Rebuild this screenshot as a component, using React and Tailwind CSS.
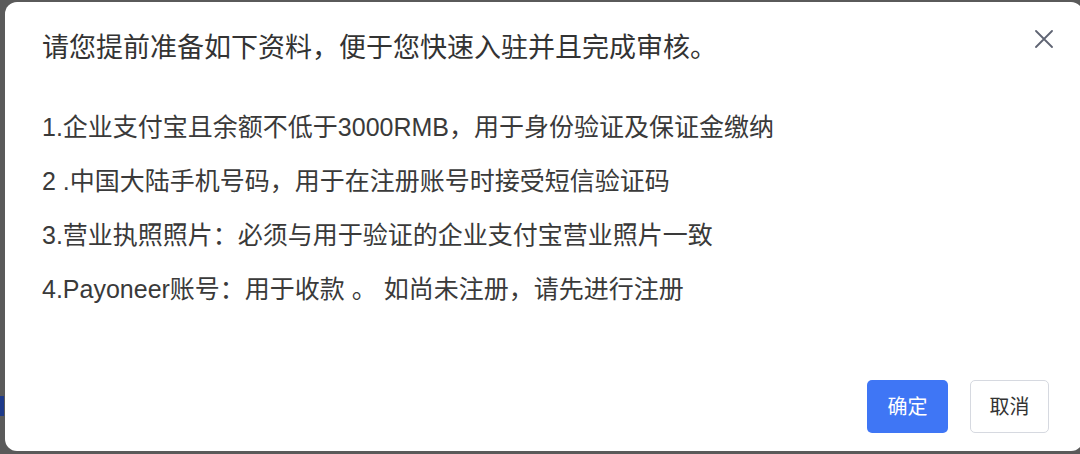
import React from "react";

const font = { fontFamily: '"Liberation Sans", "Noto Sans CJK SC", sans-serif' };

export default function App() {
  return (
    <div
      className="relative w-[1080px] h-[454px] overflow-hidden bg-[#5a5a5a]"
      style={font}
    >
      <div className="absolute left-0 top-[396px] w-[4px] h-[20px] bg-[#1e3a8a]" />
      <div className="ml-[5px] mt-[2px] w-[1078px] h-[449px] rounded-[12px] bg-white flex flex-col">
        <div className="flex items-start pt-[28px] pl-[37px] pr-[30px]">
          <h1 className="flex-1 text-[27px] leading-[36px] text-[#333333] font-normal">
            请您提前准备如下资料，便于您快速入驻并且完成审核。
          </h1>
          <button className="mt-[0px] w-[18px] h-[18px] flex items-center justify-center text-[#5f6473]">
            <svg width="18" height="18" viewBox="0 0 18 18" fill="none" stroke="currentColor" strokeWidth="1.8" strokeLinecap="round">
              <path d="M1 1L17 17M17 1L1 17" />
            </svg>
          </button>
        </div>
        <div className="mt-[34px] pl-[37px] text-[25px] leading-[54px] text-[#3a3a3a]">
          <p>1.企业支付宝且余额不低于3000RMB，用于身份验证及保证金缴纳</p>
          <p>2 .中国大陆手机号码，用于在注册账号时接受短信验证码</p>
          <p>3.营业执照照片：必须与用于验证的企业支付宝营业照片一致</p>
          <p>4.Payoneer账号：用于收款 。 如尚未注册，请先进行注册</p>
        </div>
        <div className="flex-1" />
        <div className="flex justify-end gap-[22px] pr-[34px] pb-[18px]">
          <button className="w-[81px] h-[53px] rounded-[5px] bg-[#3f76f5] text-white text-[20px]">
            确定
          </button>
          <button className="w-[79px] h-[53px] rounded-[5px] border border-[#d6d9e0] bg-white text-[#333333] text-[20px]">
            取消
          </button>
        </div>
      </div>
    </div>
  );
}
